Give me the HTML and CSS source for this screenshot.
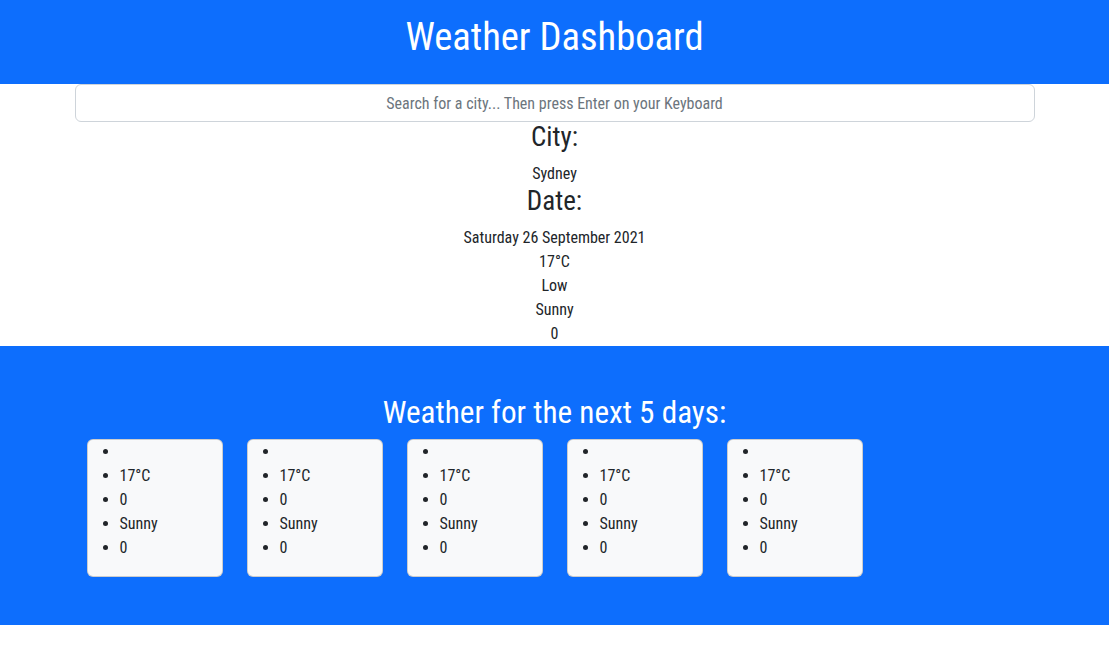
FILE: index.html
```html
<!DOCTYPE html>
<html lang="en">
<head>
<meta charset="utf-8">
<title>Weather Dashboard</title>
<link rel="stylesheet" href="styles.css">
</head>
<body>
<header class="hero">
  <h1 class="hero-title">Weather Dashboard</h1>
</header>
<main class="container">
  <input class="search" type="text" placeholder="Search for a city... Then press Enter on your Keyboard">
  <section class="today">
    <h3 class="label">City:</h3>
    <div class="line">Sydney</div>
    <h3 class="label">Date:</h3>
    <div class="line">Saturday 26 September 2021</div>
    <div class="line">17°C</div>
    <div class="line">Low</div>
    <div class="line">Sunny</div>
    <div class="line">0</div>
  </section>
</main>
<section class="forecast">
  <div class="container">
    <h2 class="forecast-title">Weather for the next 5 days:</h2>
    <div class="cards">
      <ul class="card"><li></li><li>17°C</li><li>0</li><li>Sunny</li><li>0</li></ul>
      <ul class="card"><li></li><li>17°C</li><li>0</li><li>Sunny</li><li>0</li></ul>
      <ul class="card"><li></li><li>17°C</li><li>0</li><li>Sunny</li><li>0</li></ul>
      <ul class="card"><li></li><li>17°C</li><li>0</li><li>Sunny</li><li>0</li></ul>
      <ul class="card"><li></li><li>17°C</li><li>0</li><li>Sunny</li><li>0</li></ul>
    </div>
  </div>
</section>
</body>
</html>
```
FILE: styles.css
```css
* { box-sizing: border-box; }
body {
  margin: 0;
  font-family: "Roboto Condensed", "Liberation Sans Narrow", Roboto, sans-serif;
  font-stretch: 75%;
  font-size: 16px;
  line-height: 1.5;
  color: #212529;
  background: #fff;
}
.hero {
  background: #0d6efd;
  color: #fff;
  text-align: center;
  height: 84px;
  padding-top: 14px;
}
.hero-title {
  margin: 0;
  font-size: 38.6px;
  font-weight: 400;
  line-height: 46px;
}
.container {
  width: 960px;
  margin: 0 auto;
}
.search {
  display: block;
  width: 960px;
  height: 38px;
  border: 1px solid #ced4da;
  border-radius: 6px;
  font: inherit;
  text-align: center;
  color: #212529;
  padding: 6px 12px;
  background: #fff;
}
.search::placeholder { color: #6c757d; opacity: 1; }
.today { text-align: center; }
.label {
  margin: 0 0 8px;
  font-size: 27px;
  font-weight: 400;
  line-height: 31.8px;
}
.line { line-height: 24px; }
.forecast {
  background: #0d6efd;
  padding: 48px 0 48px;
}
.forecast-title {
  margin: 0 0 8px;
  text-align: center;
  color: #fff;
  font-size: 31.2px;
  font-weight: 400;
  line-height: 37.4px;
}
.cards {
  display: flex;
  gap: 24px;
  padding-left: 12px;
}
.card {
  width: 136px;
  margin: 0;
  padding: 0 0 16px 32px;
  background: #f8f9fa;
  border: 1px solid rgba(0,0,0,.175);
  border-radius: 6px;
  list-style: disc;
}
.card li { line-height: 24px; min-height: 24px; }
```
